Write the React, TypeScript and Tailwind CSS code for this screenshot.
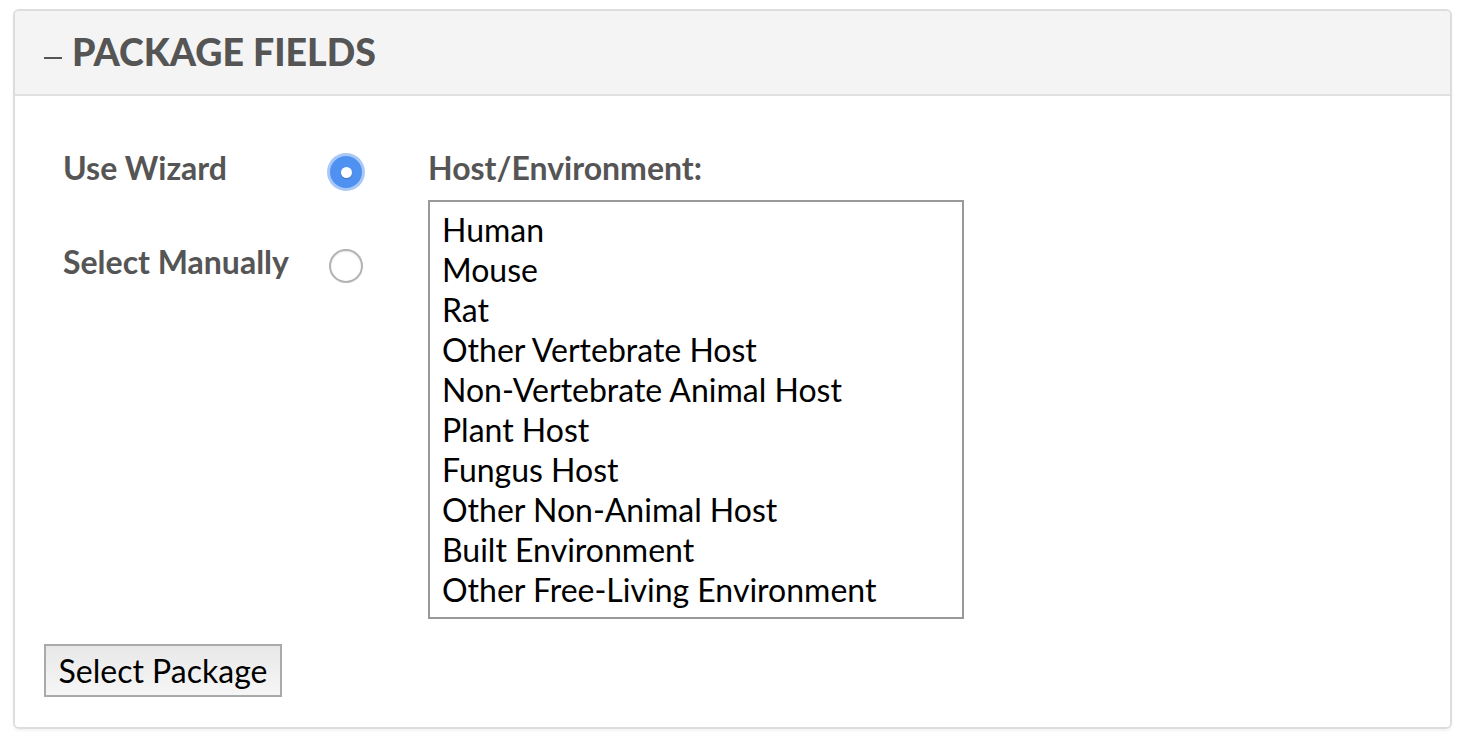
import React, { useState } from 'react'

const hosts = [
  'Human',
  'Mouse',
  'Rat',
  'Other Vertebrate Host',
  'Non-Vertebrate Animal Host',
  'Plant Host',
  'Fungus Host',
  'Other Non-Animal Host',
  'Built Environment',
  'Other Free-Living Environment',
]

function Radio({ checked, onClick }: { checked: boolean; onClick: () => void }) {
  if (checked) {
    return (
      <button
        onClick={onClick}
        className="flex h-[38px] w-[38px] items-center justify-center rounded-full bg-[#a9c8f6]"
      >
        <span className="flex h-[32px] w-[32px] items-center justify-center rounded-full bg-[#4f91f1]">
          <span className="h-[11px] w-[11px] rounded-full bg-white shadow-[0_1px_1px_rgba(0,0,0,0.25)]" />
        </span>
      </button>
    )
  }
  return (
    <button
      onClick={onClick}
      className="h-[34px] w-[34px] rounded-full border-2 border-[#b3b3b3] bg-white shadow-[inset_0_1px_2px_rgba(0,0,0,0.08)]"
    />
  )
}

export default function App() {
  const [mode, setMode] = useState<'wizard' | 'manual'>('wizard')

  return (
    <div className="min-h-screen bg-white pl-[13px] pr-[16px] pt-[9px] font-['Lato','Liberation_Sans',sans-serif]">
      <div className="overflow-hidden rounded-[6px] border-2 border-[#dddddd] shadow-[0_2px_3px_rgba(0,0,0,0.05)]">
        <div className="flex h-[85px] items-center border-b-2 border-[#e0e0e0] bg-[#f4f4f4] pl-[29px]">
          <span className="mr-[10px] mt-[10px] inline-block h-[2px] w-[18px] bg-[#555]" />
          <h2 className="text-[37.5px] font-black text-[#555]">PACKAGE FIELDS</h2>
        </div>

        <div className="bg-white pb-[30px] pl-[29px] pt-[50px]">
          <div className="flex">
            <div className="flex w-[250px] flex-col pl-[19px]">
              <div className="flex h-[44px] items-center text-[32px] font-bold text-[#555]">Use Wizard</div>
              <div className="mt-[50px] flex h-[44px] items-center text-[32px] font-bold text-[#555]">Select Manually</div>
            </div>
            <div className="flex w-[134px] flex-col pl-[33px]">
              <div className="flex h-[44px] items-center pt-[8px]">
                <Radio checked={mode === 'wizard'} onClick={() => setMode('wizard')} />
              </div>
              <div className="mt-[50px] flex h-[44px] items-center pl-[2px] pt-[8px]">
                <Radio checked={mode === 'manual'} onClick={() => setMode('manual')} />
              </div>
            </div>
            <div className="flex flex-col">
              <div className="flex h-[44px] items-center text-[32px] font-bold text-[#555]">Host/Environment:</div>
              <div className="mt-[10px] h-[419px] w-[536px] border-2 border-[#999] bg-white pl-[12px] pt-[8px]">
                {hosts.map((h) => (
                  <div key={h} className="text-[32px] leading-[40px] text-black">
                    {h}
                  </div>
                ))}
              </div>
            </div>
          </div>
          <button className="mt-[25px] h-[53px] w-[238px] border-2 border-[#aaa] bg-gradient-to-b from-[#e8e8e8] to-[#f6f6f6] text-[32px] text-black">
            Select Package
          </button>
        </div>
      </div>
    </div>
  )
}
